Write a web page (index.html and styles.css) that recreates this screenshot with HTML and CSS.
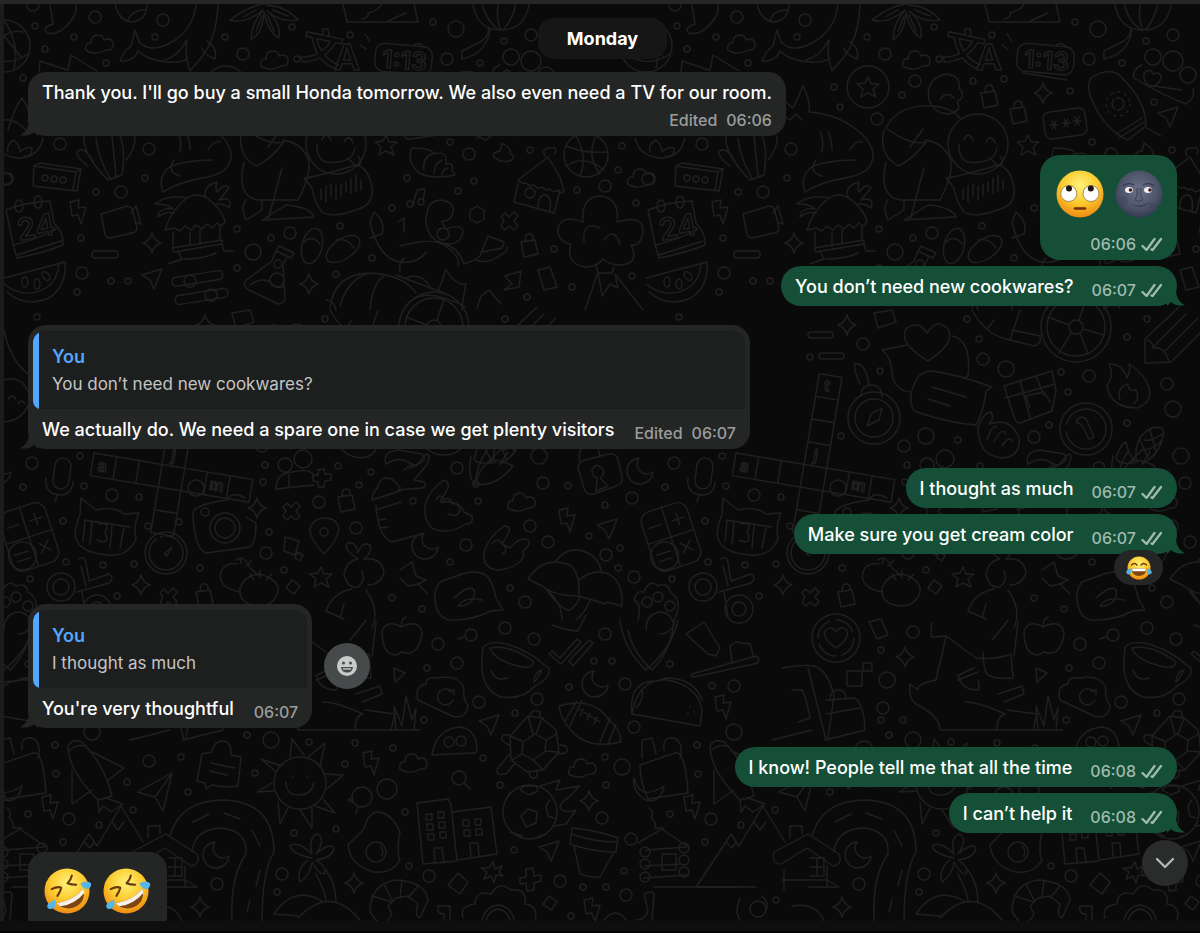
FILE: index.html
```
<!DOCTYPE html>
<html lang="en">

<head>
    <meta charset="UTF-8">
    <meta name="viewport" content="width=device-width, initial-scale=1.0">
    <title>Chat</title>
    <link rel="stylesheet" href="styles.css">
</head>

<body>
    <!-- shared icons -->
    <svg class="sprite" aria-hidden="true">
        <defs>
            <radialGradient id="skin" cx="50%" cy="32%" r="68%">
                <stop offset="0" stop-color="#fff27a" />
                <stop offset="0.55" stop-color="#fccb2e" />
                <stop offset="1" stop-color="#ee8a12" />
            </radialGradient>
            <radialGradient id="moon-skin" cx="50%" cy="42%" r="58%">
                <stop offset="0" stop-color="#6c7289" />
                <stop offset="0.7" stop-color="#4c5268" />
                <stop offset="1" stop-color="#343b50" />
            </radialGradient>

            <symbol id="ticks" viewBox="0 0 22 16">
                <path d="M1.500 10l4 4L13.500 3M10.500 13.500l1 .5L20 3" fill="none" stroke="currentColor" stroke-width="2.300" stroke-linecap="round" stroke-linejoin="round" />
            </symbol>

            <symbol id="emoji-eyeroll" viewBox="0 0 48 48">
                <circle cx="24" cy="24" r="23.500" fill="url(#skin)" />
                <circle cx="12.800" cy="23.500" r="8" fill="#fff" stroke="#8b7440" stroke-width="0.800" />
                <circle cx="35" cy="23.500" r="8" fill="#fff" stroke="#8b7440" stroke-width="0.800" />
                <circle cx="13" cy="18.500" r="3" fill="#1c1310" />
                <circle cx="34.800" cy="18.500" r="3" fill="#1c1310" />
                <path d="M19 38.500h10" stroke="#6e2e0c" stroke-width="2.400" stroke-linecap="round" />
            </symbol>

            <symbol id="emoji-moon" viewBox="0 0 48 48">
                <circle cx="24" cy="24" r="23.500" fill="url(#moon-skin)" />
                <circle cx="9" cy="31" r="4" fill="#3f465a" opacity="0.500" />
                <circle cx="37" cy="37" r="4" fill="#3f465a" opacity="0.500" />
                <path d="M8 16q5-4 11-1M28 15q6-3 11 1" fill="none" stroke="#363b4e" stroke-width="1.200" />
                <path d="M22 18q1 8-2 12q4 3 8 0q-3-4-2-12" fill="#596078" stroke="#3a4055" stroke-width="0.800" />
                <ellipse cx="14" cy="20" rx="4" ry="3" fill="#f4f0ee" />
                <ellipse cx="33" cy="20" rx="4" ry="3" fill="#f4f0ee" />
                <circle cx="15.500" cy="20" r="1.800" fill="#3a1c1c" />
                <circle cx="35" cy="20" r="1.800" fill="#3a1c1c" />
                <path d="M15 34q9 4 19-2q-3 5-9 5t-10-3z" fill="#3d4358" />
            </symbol>

            <symbol id="emoji-rofl" viewBox="0 0 50 48">
                <circle cx="24" cy="24" r="23.500" fill="url(#skin)" />
                <path d="M8 22q6-3 10-1.500q-1 4-4 8.500M29 8q-1 5-4.500 8q4 1.500 9 1.500" fill="none" stroke="#69370c" stroke-width="2.200" stroke-linejoin="round" stroke-linecap="round" />
                <path d="M13 37Q31 34 41 21.500Q44 35 33 40.500Q22 45 13 37z" fill="#7d4511" />
                <path d="M13 37Q31 34 41 21.500L42 26Q32 38 17 40z" fill="#f6f1ea" />
                <path d="M38 16q7-4 11 0q1 5-4 6q-5 0-7-6z" fill="#55b6ea" />
                <path d="M11.500 33q2 8-3 9.500q-6 1-5-4q2-3 8-5.500z" fill="#55b6ea" />
            </symbol>

            <symbol id="emoji-joy" viewBox="0 0 26 24">
                <circle cx="13" cy="12" r="11.500" fill="url(#skin)" />
                <path d="M5.500 9q3-3 5.500 0M15 9q2.500-3 5.500 0" fill="none" stroke="#69370c" stroke-width="1.400" stroke-linecap="round" />
                <path d="M5.500 12.500h15q-.5 7.500-7.500 7.500t-7.500-7.500z" fill="#7d4511" />
                <path d="M6 12.500h14l-.6 2.800h-12.800z" fill="#fff" />
                <path d="M4.800 12.500q1 6-2.300 6q-3-1-2-3.500q1-2 4.300-2.500zM21.200 12.500q-1 6 2.300 6q3-1 2-3.500q-1-2-4.300-2.500z" fill="#4fb2ea" />
            </symbol>

            <symbol id="tail-out" viewBox="0 0 18 16">
                <path d="M9 0C9 7 12 12 18 15.500C12 16 7 15 4 12L0 16V0z" fill="currentColor" />
            </symbol>
            <symbol id="tail-in" viewBox="0 0 18 16">
                <path d="M9 0C9 7 6 12 0 15.500C6 16 11 15 14 12L18 16V0z" fill="currentColor" />
            </symbol>

            <!-- small doodles, each centred on 0,0 -->
            <g id="d-bolt"><path d="M-8-10l9-2l-1 8l8-1l-5 17l-3-9l-6 1z" /></g>
            <g id="d-spark"><path d="M0-10q2 8 9 10q-7 2-9 10q-2-8-9-10q7-2 9-10z" /></g>
            <g id="d-cloud"><path d="M-9 8q-6-1-4-6q1-4 5-3q0-8 7-8q5 0 6 5q7-3 9 3q1 8-7 7q-8 5-16 2z" /></g>
            <g id="d-moon"><path d="M-3-12a13 13 0 1 0 14 14a10 10 0 0 1-14-14z" /></g>
            <g id="d-cursor"><path d="M10-9l-20 6l8 5l4 9z" /></g>
            <g id="d-cross"><path d="M-8-5l4-4l4 4l5-5l4 4l-4 5l4 5l-4 4l-5-4l-4 4l-4-4l3-5z" /></g>
            <g id="d-star"><path d="M0-10l3 7l8 0l-6 5l3 8l-8-4l-7 4l2-8l-6-5l8-1z" /></g>
            <g id="d-diamond"><path d="M-1-7l8 6l-6 8l-8-6z" /></g>
            <g id="d-bag"><path d="M-8-5l14-2l3 14l-14 3zM-4-6q0-8 5-7q4 1 3 6" /></g>

            <pattern id="wallpaper" width="642" height="933" patternUnits="userSpaceOnUse">
                <use href="#doodles" x="-642" />
                <use href="#doodles" />
                <use href="#doodles" x="642" />
            </pattern>

            <g id="doodles" class="doodles">
                <g id="rings"></g>
                <g id="stamps"></g>

                <!-- sea life, fruit, sock, flower -->
                <path d="M50 4l3 20q-12 4-6 9q14 3 26-15q4-6 3-14M115 4q4 17 17 18q15-2 15-18M128 21q3-11 17-11" />
                <path d="M218 4q-1 34-17 54q-7 8-11 13q-6-17-3-31M196 4q-3 28-28 40q-18 9-29-2l-4-12l-4 16q-8 6-11 15q14 1 18-10q10 10 32 11q12 1 18-4M207 41q11 7 8 18q-12-5-13-11M164 60q15-4 22-19" />
                <path d="M264 4q-16 2-34 16q17 4 33-10q-12 14-12 30q12-8 13-28q4 20 15 26q2-16-12-27q14 12 31 9q-12-14-32-15M243 17l13-7M256 31l6-15M274 31l-7-16M288 16l-15-6" />
                <circle cx="4" cy="46" r="26" /><path d="M-8 46q16-18 32-14M4 20q16 24 10 48M-14 56q22 12 42-2M4 36l18 22" />
                <path d="M39 72l1-11l27 9M68 70l3-15l26 16" />
                <!-- translate and alarm clock -->
                <g class="letters">
                    <text x="302" y="62" font-size="40" transform="rotate(12 320 48)">文</text>
                    <text x="334" y="70" font-size="36">A</text>
                    <text x="382" y="69" font-size="25" transform="rotate(4 402 60)">1:13</text>
                    <text x="17" y="238" font-size="30" transform="rotate(-10 33 228)">24</text>
                </g>
                <path d="M343 4l4 18h71l-4-18M362 19q8-2 6-6q10-2 14-9M386 22l20-9" />
                <rect x="375" y="45" width="57" height="28" rx="9" transform="rotate(5 403 59)" />
                <path d="M381 73l44 7M366 49l-6-4M370 42l-5-8M414 45q6-4 10 2" />
                <path d="M473 4q4 26 28 26t28-26M482 4q5 18 16 25M498 4q-2 16 3 26M516 4q-4 16-12 25M488 27q2 8-6 14l-20 10v8q18-4 24-17q3-4 4-12" />
                <circle cx="511" cy="57" r="8" /><circle cx="531" cy="61" r="10" /><circle cx="546" cy="75" r="8" />
                <path d="M500 65q-10 4-8 13q30 18 52 26q10-6 7-15M502 73q6-6 9 1q8-3 8 4q-2 8-12 9q-6-6-5-14M505 85l34 5" />
                <path d="M449 78q22-14 33 2q22 22 22 46l-18 14q-24-10-38-44q-3-12 1-18zM504 121l-27 17M500 118l-26 16M505 128l14 8" />
                <circle cx="476" cy="104" r="6" stroke-dasharray="10 3" /><circle cx="476" cy="104" r="12" stroke-dasharray="2 5" />
                <circle cx="226" cy="87" r="21" /><use href="#d-star" x="226" y="87" />
                <!-- fox -->
                <path d="M137 120q6-10 2-22l12 10q6-12 10-22q8 16 6 26q28 2 48 18q22 18 14 34q-4 10-26 14q-24 4-40 14q-6-16 8-26q18-6 42-6M180 152q2-12-2-20M190 150q0-10-4-18M208 150q6-10 12-8M140 115l8 5l6-6l6 6M174 160q-8 12 6 16" />
                <!-- hug -->
                <path d="M287 100q-4-22 18-26q14 2 12 14q8 8-2 14q6 8-8 12q-14 0-20-14zM298 100q6-10 14-2M244 128q12-24 46-22M318 118q-8-10-26-12M244 128q24 18 40 14q-14 18-28 24q-20-12-14-36M268 147l13-18M244 162q-8 34 14 38h40q16-30 9-44q-8-14-24-16M246 200q-6 8 0 20l16-10v-9M262 220l52-3q-4-10-28-12l-24 15M282 168l-14 52" />
                <circle cx="336" cy="144" r="30" /><path d="M322 140q4-10 9 0M344 142q5-9 9 1M317 144q-1 22 20 18q16-1 18-14M348 158l8 8q8-2 2-10" />
                <path d="M304 178q16-2 52-13q12 2 16 22q2 18-14 22q-24 10-36 3q-8-10-10-24zM321 189v10M326 186v16M331 184v12M336 186v14M341 184v12M346 182v10M351 178v15M356 175v16M361 180v10" />
                <rect x="402" y="110" width="42" height="27" rx="6" transform="rotate(-8 423 123)" />
                <path d="M408 125h8M410 121l4 8M414 121l-4 8M420 123h8M422 119l4 8M426 119l-4 8M431 121h8M433 117l4 8M437 117l-4 8" />
                <!-- lotus bowl, ticket, cactus -->
                <path d="M8 130q6-22 14-32q10 14 6 24M4 120q10-2 22 10M43 138q-4 20-26 20q-20-2-24-20M8 152q-2-8 6-12q6 6 6 12q6-6 12-4q0 10-8 8" />
                <path d="M34 166l6-3l41 6l-4 22l-44-5zM34 166l42 6l-3 18M76 172l5-3" />
                <path d="M84 136q-2 18 24 44l14-5q4-26-2-39M96 138q2 20 14 40M112 136l4 40M126 160q10-12 9-24M88 166q-16-12-9-16q8-2 16 16" />
                <!-- calendar, camcorder, hut -->
                <path d="M6 210q20-8 44-9l4 22q10 10 9 22q-20 8-46 13l-4-14zM14 245q24-6 42-16M17 255l44-14" />
                <ellipse cx="19" cy="206" rx="4" ry="6" /><ellipse cx="38" cy="202" rx="4" ry="6" />
                <path d="M101 214l26-8q5 0 6 6l4 16q0 4-5 5l-22 5q-4 0-5-4zM131 213l5-7l5 18l-6-2" />
                <path d="M165 230q6-20 22-32q10-6 20 0q16 12 18 24l-4 4l-4-3l-5 5l-5-4l-5 5l-6-4l-5 5l-6-4l-5 5l-6-3zM173 232v14M220 227v12M190 232v14M200 230v14M172 248l50-8v4l-48 8zM178 251l4 8l-14 5M222 244l2 7h9M184 259q20 0 32-6M187 198q-20-4-32 6q14 0 18 5q-14-2-15 8q8-6 16-4M206 198q-4-12 11-16q-2 6 0 10q8-10 12-4l-10 12q14-4 10 8q-8-6-14-3" />
                <!-- fruit, sliders, flask, sandals, chili -->
                <path d="M4 278l61-16q2 24-16 36q-24 10-42-6M4 284q20 16 42 4q12-8 13-24" />
                <ellipse cx="25" cy="282" rx="3" ry="5" /><ellipse cx="37" cy="284" rx="3" ry="5" /><ellipse cx="46" cy="276" rx="3" ry="5" transform="rotate(-40 46 276)" />
                <rect x="92" y="251" width="26" height="7" rx="3" />
                <rect x="172" y="274" width="51" height="9" rx="4" transform="rotate(-9 197 279)" /><circle cx="190" cy="281" r="6" />
                <rect x="175" y="292" width="53" height="9" rx="4" transform="rotate(-9 201 297)" /><circle cx="211" cy="295" r="6" />
                <path d="M276 251l-4 10l-27 20q-2 6 4 9l29 14q6 0 7-6l-2-33l4-9M279 246l15 7l-3 5l-15-7zM250 285q12-8 20-3q6 8 14 4" /><circle cx="277" cy="280" r="7" /><circle cx="278" cy="264" r="4" />
                <ellipse cx="312" cy="246" rx="10" ry="18" transform="rotate(14 312 246)" /><ellipse cx="343" cy="249" rx="10" ry="19" transform="rotate(56 343 249)" /><path d="M304 242q8-8 16 2M336 240q12-2 18 8" />
                <path d="M370 222q8 36 30 40q18 2 26-10M370 222l4-10q12 10 8 22l-12 4M330 308q4-34 40-35q34 2 46 20M340 306q8-28 30-33M370 310q2-26 14-34M326 300q8 0 10 10" />
                <!-- shell, beach house, ball, notes -->
                <path d="M412 148q20 0 22 6q14-4 12 10q8-2 6 6l3 5q-30 6-40-6q-8-10-3-21zM424 170q-2-12 8-16M434 174q0-10 8-14M442 176q0-6 6-8" />
                <path d="M494 157q-2-5 6-6l2-8q10 6 8 10q6 4 2 7q-10 4-18-3z" />
                <path d="M518 180l30-23l12 20l4 14q-3 4-7-1q-4 4-7-1q-5 2-8-2q-4 3-8-2q-4 2-8-2q-5 1-8-3zM518 184l-4 18l40 11l6-23M538 208q0-14 8-13q6 2 4 16M545 156q-4-8 5-8q8-2 5 6" /><circle cx="530" cy="193" r="5" />
                <circle cx="586" cy="155" r="22" /><path d="M566 146q20 8 42 6M566 166q18-12 38 4M576 136q12 20 4 40M596 136q-10 20 4 38" />
                <path d="M413 205l4-15l8-1l-2 12M398 222l6-4v14" /><circle cx="410" cy="204" r="3" /><circle cx="421" cy="202" r="3" />
                <path d="M427 215q0-14 14-15q14 2 12 12q-2 10-11 9l4 8q16-6 17 3q-2 12-15 12q-16-2-20-14q-4-10-1-15zM400 246q30-8 42-2q16 2 22 20q12-4 16-8l8-20l16 6l-2 6l-20 4M476 260q10 4 20-2q14-8 11-11M404 310q14-28 62-3M396 275l48 18M438 292l8-22q10 16 20 14q-4 20-4 26M445 246q16 10 13 20" />
                <circle cx="443" cy="234" r="6" /><path d="M404 258q-6 6-4 14M406 278q14-6 24 8" />
                <path d="M477 206l7 4v9l-7 4l-7-4v-9z" />
                <!-- tree on a hill -->
                <path d="M583 222q-2-25 17-26q20 2 17 26q26-8 26 9q-2 16-12 14q10 20-14 20q-10-2-14-6q-6 8-18 8q-20-4-14-23q-14-2-13-16q4-14 25-6zM600 228q-18-8-16 14M604 240q10-14 16 4M596 265l2 8h14l2-6M585 310l13-38l4 24l8-12l8 4l-3-14l28 36" />
                <path d="M504 290l8-6l-7-8l16-5l-2 16zM538 270l12-3l7 20l-13 3zM477 308l4-12l8-6l12 14" />

                <!-- balloon hearts, compass, parcel, wheel, pencil -->
                <rect x="166" y="332" width="25" height="6" rx="3" /><rect x="177" y="353" width="25" height="6" rx="3" />
                <path d="M232 313l18-3l4 12l-18 6zM286 361q-30-18-22-32q12-10 21 4q10-16 21-4q8 14-20 32zM265 345l-25 5q10 8 10 24q2 16 18 18M310 336q20 4 16 40l-4 2" />
                <path d="M290 371q28 4 60 16l-6 4q-2 20-10 34q-28-2-62-14q-8-14 4-34q6-6 14-6zM290 387l34 10M286 399l22 7" />
                <circle cx="232" cy="418" r="26" /><circle cx="232" cy="418" r="19" /><path d="M225 426l4-12l11-6l-3 12zM219 396q0-10 9-11q12 0 12 12M218 384q-10-24-2-20q8 2 11 20" />
                <path d="M362 386l48-15l4 20l-4 20l-32 12q-4 0-6-6zM363 398l50-14M378 380l10 38M394 376l8 20M388 408l-4-12l18-4l6 10" />
                <circle cx="434" cy="327" r="35" /><circle cx="434" cy="327" r="29" /><circle cx="434" cy="327" r="7" /><path d="M427 325l-21-8M437 320l7-21M441 329l21 6M429 333l-12 20M438 333l8 21" />
                <path d="M330 310q14 26 38 30l10-30M346 328l6-8M368 340l24 6q8-2 6-10l-28-6" />
                <path d="M503 363v-24l34-32M503 363l26-1l34-34M503 340q8 0 8 8q12-2 16 14M512 346l32-32M522 352l34-34" />
                <circle cx="444" cy="429" r="26" /><circle cx="444" cy="429" r="20" stroke-dasharray="60 8" /><path d="M434 422q4-8 10-3l8 18l-5 2l-7-14z" />
                <path d="M465 386q8-12 2-22q14 0 18 14q4-8 2-14q16 10 20 24q4 14-12 20q-26 0-30-22zM478 400q-4-12 8-16q0 8 8 6q4 8-2 14" />
                <path d="M337 424q6-12 12-12q4 6-2 12l10-2q14 0 20 16q2 18-16 20q-22-2-24-22q-2-6 0-12zM345 440q6-18 10-12M352 442q8-16 12-8M360 446q8-12 10-4M386 464q-4-12 12-14l24 4q6 6-4 10l-8 4" />
                <path d="M494 460q-2-24 16-32q16-4 10 12q-4 16-20 24M500 450q12 0 20-10M502 440q8 2 18-6M496 462q-20 4-22-4q4-14 10-16q2 12 8 18M508 430l6 22M498 440l8 18" />
                <path d="M4 330q6 30 24 44M4 380q20-6 26 18q-4 22-26 24M8 400q4-8 8 0M18 404q4-6 7 0" />
                <!-- crossword -->
                <g transform="translate(94 453) rotate(9.500)">
                    <path d="M0 0h161v23h-161zM23 0v23M46 0v23M69-92h23v161h-23zM69-69h23M69-46h23M69-23h23M69 0h23M69 23h23M69 46h23M115 0v23M138 0v23" />
                    <g class="letters">
                        <text x="6" y="17" font-size="16">a</text><text x="76" y="-76" font-size="16">t</text><text x="77" y="-5" font-size="16">j</text><text x="119" y="17" font-size="16">m</text>
                    </g>
                </g>
                <!-- microphone, calculator, cat, gauge, camera -->
                <rect x="54" y="458" width="16" height="31" rx="8" transform="rotate(8 62 473)" /><path d="M46 478q-2 16 14 17q12 0 13-13M57 495l-2 7" />
                <g transform="translate(29 537) rotate(-18)"><rect x="-24" y="-31" width="48" height="62" rx="10" /><path d="M0-31v62M-24 0h48M12-21v12M6-15h12M-18-15h12M7 9l10 10M17 9l-10 10" /><circle cx="-12" cy="16" r="14" /><path d="M-19 13h14M-19 20h14" /></g>
                <path d="M81 498l15 12q18-4 28 4l15-1q-6 12-3 26q-8 18-28 16q-32-2-33-22q2-12 5-18zM84 520l46 7M85 521l-2 20M92 522l-2 22M112 526l-2 22M124 528l-4 20M99 524q12-2 6 8q6 14-8 8" />
                <circle cx="166" cy="553" r="21" /><circle cx="166" cy="553" r="17" stroke-dasharray="70 4 2 4" /><path d="M164 554l8-7l-5 9z" />
                <path d="M193 512q4-8 34-12q4-8 14-4l4 2M246 517l10 6q0 20-6 24l-44 6q-12-4-13-41" /><circle cx="225" cy="528" r="15" /><circle cx="225" cy="528" r="10" /><circle cx="205" cy="512" r="4" />
                <circle cx="285" cy="465" r="7" /><circle cx="303" cy="459" r="9" /><path d="M276 489q0-16 16-17q20-4 22 4M276 489l38-4M289 487v-12M318 470l6-1l1 5h6v6l-6 1l-1 6h-6v-5l-5-1v-6h5z" />
                <path d="M324 554q-16-18-14-26q4-10 15-10q12 0 14 11q-2 12-15 25z" /><circle cx="324" cy="532" r="4" />
                <path d="M285 537l14 4l-4 14l-11-4zM297 552l6 3l-3 6l-5-3z" />
                <path d="M372 500l28-9v-4l-8-8q-12-4-14 8q-6 6-6 13zM375 510l26-8M376 505q2 32 16 37l30-8M378 520l8-1M380 528l8-1" />
                <path d="M241 592q-24-4-20-20q4-10 16-8M236 560q8-6 14 8q6 4 8 8M240 564l2-6M246 566l6-6" /><path d="M258 606q-20-2-18-18q6-14 20-14q20 6 18 18q-4 14-20 14zM254 580l-4-6M260 578v-8M266 580l6-6" />
                <circle cx="61" cy="587" r="14" /><circle cx="61" cy="587" r="8" /><path d="M79 559q6-4 7 4l3 18l20-7q6 4 0 9l-32 9M81 566l5 20M82 592l4 24" /><circle cx="97" cy="609" r="14" /><circle cx="97" cy="609" r="7" />
                <path d="M344 575q2-14 14-16q-16-10-10-16q8-2 10 10q4-12 12-8q2 8-6 14q18-2 20 14q-4 12-16 12M344 575q4 14 14 12q8-6 4-16M352 589q-20 4-26 22l18 8M366 590q14 20 6 38M344 604l-4 14" />
                <!-- hands, locks, hats -->
                <path d="M386 464q10-6 18-4l12 6l10-12q6 0 0 12l-12 14l10 2q4 4-2 6l-24 2M404 470l8-6" />
                <path d="M426 502q4-12 18-22q6 2 4 8l-8 14q20-2 24 10l8 4q2 8-6 8q-20 12-34 4q-10-10-6-26zM436 500q4-8 8 0q6-4 8 4q6-2 8 6q-2 8-12 4M484 552q4-14 20-26q8 0 4 8l-6 10l8 4q10-12 18-8q4 4-6 12l2 2q-2 12-24 16q-18 0-16-18zM492 544q6-8 10 0q8 6 0 10" />
                <path d="M471 456q-4 22 4 28q20 4 38-18q-12-6-20-6q-12 4-18 24M487 450q-10 14-12 34M500 450l-14 14M508 452l-8 12" /><circle cx="476" cy="484" r="3" />
                <path d="M578 468q0-6 8-8l22-6q8-2 10 6l4 16q2 8-6 10l-22 8q-8 2-10-6zM580 462q-2-10 2-14M600 456l-2-8M592 470q4-8 10-2q4 6-2 10l8 8l-12 5l1-13q-5-2-5-8z" />
                <path d="M528 579q16-24 42-14q10 8 9 29M555 562q10-14 24-12q20 4 23 24M579 580q14-12 30-6q14 8 13 32l-16-4M528 579l14 7q12 10 37 10l27 8M542 586q20 14 20 34M548 592q16 20 22 18q8-6 10-14M590 600q-4 12-14 20" />
                <path d="M400 570l12-8l4 14l10 4l-8 4l10 10M418 584l-10 2l-8-8" />
                <path d="M436 606q-4-14 4-24l22-8q12-4 22 0q8 4 12 24l7 12l-12 1q-20 10-42 9q-10-2-13-14zM454 598q16-14 20-8q2 16-16 16q6-10 24-6" />
                <path d="M-4 620q4-16-4-20q2-10 10-8q6-14 14-6q10-4 12 6q14 8 4 28q-2 30-22 50q-20-18-24-40" /><circle cx="5" cy="602" r="5" /><circle cx="16" cy="597" r="5" /><circle cx="28" cy="606" r="5" />
                <path d="M4 630q0-16 14-18q10 0 14 12q-4 10-14 10" />

                <!-- badge, bus, stroller, apple -->
                <circle cx="194" cy="638" r="24" /><circle cx="194" cy="638" r="18" stroke-dasharray="22 6" /><path d="M194 648q-16-12-10-18q6-5 10 2q6-8 11-1q3 7-11 17z" />
                <path d="M227 622l12-3l7 16l-11 4zM205 671h15v15h-15zM221 663h9v8h-9zM140 668q24-4 32-2q14 4 20 30l-2 14l-4 28M166 668l18 72M184 700l28-2q10 4 11 32l-40 10M184 714l34-6M188 700q0-10 8-10q8 0 8 8M130 740l40-10M150 690h10q4 6 8 28l-12 4" />
                <path d="M290 623q-2 10 0 14l14-1q-4 20-8 34l-2 10q-20 4-18 10l-8-6q-2 14 6 20q24 12 24 26h122M304 636l30 22q20 2 35-4l2 24q-26 2-28-8q-2-8-2-18M332 668q-14 6-16 8q4 14 20 14q2-4 0-10M316 680l20-8M356 694l24-8l2 8l-20 8M365 710q30 4 30 4l-4 16h-36q0-14 8-16q-26-12-40-12M396 730l-2-24l8 20l4-30l6 24l4-12l-2 22M376 622l-4 34M350 640q12-14 16-20" />
                <path d="M401 627q-14-8-19 4q0 24 14 24l6-3q16 6 20-18q-2-16-21-7zM401 627q0-8 5-10M394 668l11 5l-10 9z" />
                <!-- cup, double tick, toothbrush, cloud -->
                <path d="M483 648q4-8 24-4q24 8 36 20l6 4q2 10-14 18q-12 14-34 11q-24-8-18-49zM490 648q20-4 44 14q-2 8-16 4q-24-6-28-18zM542 670l-6 10l-2 2q0-10 8-12M491 670q4 12 16 8" />
                <path d="M549 654l3-3l8 7l17-19l4 3l-20 22zM569 661l20-21l4 3l-20 23zM552 625q16 6 26 6l8-16M620 620q4 30 26 50q26-22 32-50" />
                <path d="M686 634l18-12l16 26l-4 8l-8-2zM692 674l64-18q4 2 2 7l-64 14q-4-1-2-3zM732 662l-2-16l6-4l14 2l4 14" />
                <path d="M418 700q-4-14 8-16q0-8 12-6q20-4 26 10q-2 8 4 18q-2 14-16 10zM452 692a8 8 0 1 0 1 8M449 691l5-1v5" />
                <!-- football, taco, turtle, monster -->
                <path d="M559 706q34-10 50 14q12 10 12 22q-34 8-50-12q-10-10-12-24zM577 701l-12 20M582 700l-12 26M610 718l-10 24M616 724l-8 20M580 710l20 12M583 709l-3 7M590 713l-3 7M597 717l-3 7" />
                <path d="M-10 714q6-36 36-34q30 6 34 30l-2 16zM-10 714q-4-34 26-33l8-3q28 0 36 22M-6 708q8-8 6-18M48 706v1M52 711v1M46 713v1" />
                <path d="M510 736l18-20l14 2l14 12l3 22l-16 18l-16 2l-16-12zM523 742l12-8l11 6l-1 12l-12 8l-11-6zM528 716l5 18M542 718l-6 16M557 734l-11 6M558 752l-13-1M543 770l-10-10M512 760l10-6M510 736l12 5M530 716q2-8 10-4v5M509 745q-10-4-6-10h8M560 745q10 0 6 8l-7 1M516 762l-10 12q-12 2-8-6l12-14M529 772q2 10 8 4v-6" />
                <path d="M432 755q4-26 28-28q16 2 17 22q0 4-4 4z" /><circle cx="449" cy="742" r="5" /><circle cx="461" cy="741" r="5" />
                <path d="M465 784l5 5M464 637l-6 2" /><circle cx="459" cy="778" r="7" />
                <!-- backpack, rocket, plane, sign, sun -->
                <path d="M-2 765l35-12q10-4 13 40l-40 6q-8-16-8-34zM0 758v-18l10-2l4 16M22 750q-2-14 10-12q10 4 6 20M-8 778q6 24 30 8q-4 18-18 14q-14-8-12-22" />
                <path d="M68 746q4-8 14-4q22 22 30 54l-14 4q-30-30-30-54zM70 750q6-6 16-4M92 752l32 16l-16 12M72 770v34l20-14M98 800l8-2l17 6l-12 8l-8-6l-4 6z" />
                <path d="M137 792l35-19l-9 38l-8-14zM172 773l-17 24" />
                <path d="M202 754l10-2q2-12 12-11q8 2 7 14l10 2l-3 29q-14 2-26-1l-6 4l-1-6l-8-2zM211 763l24 5M210 771l17 4" />
                <circle cx="300" cy="783" r="26" /><path d="M286 782q0 14 14 13q12-1 14-12M293 776v1M307 776v1M290 757l2-18l12 16M308 757l17-14l-5 24M326 774l17 1l-16 14M323 799l12 14l-20-7M312 808v20l-12-18M288 808l-8 16l-2-22M274 791l-17 1l15-9M275 771l-14-12l21 7" />
                <circle cx="362" cy="797" r="10" /><circle cx="387" cy="789" r="10" /><path d="M352 798l-4 2l5 2M358 806l-2 8" />
                <!-- village -->
                <path d="M348 845l16-16q4-18 16-17q14 4 20 20q-4 20 0 28q-8 14-26 12q-24-6-26-27z" /><circle cx="376" cy="852" r="10" /><path d="M380 846q4 4 2 10" />
                <path d="M170 836q10-36 54-36q50 2 50 52q-12 20-12 69M192 852q2-22 28-24q28 2 26 26q-16 22-14 67M193 822l16-8M224 813l16 6M252 830l8 16M260 870l-4 16M250 900l-3 12" />
                <path d="M132 852l34-18l31 20q4 10-6 12l-26-18l-26 16q-10 0-7-12zM148 838v-12h12v8M142 870v20M185 866v20M168 858h14v18h-14M175 858v18M168 867h14M140 880h45l12 7h-30M14 828l8 0M12 887l84 0" />
                <path d="M76 854l13-20l8 12l24-40l22 36M84 842l6 6l4-6M112 822l6 8l6-8M76 854l-22 33h60" />
                <path d="M-4 843l24-14l26 18M4 850l40-3M3 866l36-2M2 878l44-3M20 854h14v16h-14z" /><circle cx="3" cy="852" r="5" /><circle cx="3" cy="864" r="5" /><circle cx="3" cy="877" r="5" /><circle cx="42" cy="848" r="5" /><circle cx="42" cy="860" r="5" /><circle cx="42" cy="872" r="5" /><path d="M7 808q6 4 2 10q6 4 4 10" />
                <path d="M312 858q-20-4-22-12q8-6 22 8q-4-18 6-20q8 6-2 20q14-12 18-6q-2 10-18 12q12 8 8 14q-6 0-12-12q-2 14-12 20q-4-12 8-22M316 874q10 20 10 28M326 870q10 14 10 32M274 914q20-30 50-12M298 918q32-34 62 2M274 914l24 2" />
                <path d="M370 912q0-28 26-32q30 2 32 20l-8 18q-6-2-2-14l-10-8l-12 2l-8 8l4 8q-8 14-16 6zM372 896l20 6M384 884l8 16M402 880l-2 18M418 886l-10 12" />
                <circle cx="530" cy="812" r="27" /><path d="M521 816l7-7l9 3l-1 11l-10 4zM520 790l4-4h12l2 5l-9 4zM550 800l-4 6l2 10l6 2M510 792l-4 8M510 832l12 4M546 834l-8 3M540 786l20-6l-4 10l24-4l-12 12q-8 4-8 10q6 6 16 2l-10 14l-12 2" />
                <path d="M417 803l31-4l3 6l6 56l-34 3zM453 812l38-5l6 47l-40 6M435 863l-1-15h8l2 15M471 857l-1-14h8l1 13M426 814h6v6h-6zM438 812h6v6h-6zM427 824h6v6h-6zM439 822h6v6h-6zM428 834h6v6h-6zM440 832h6v6h-6zM463 820h6v6h-6zM475 819h6v6h-6zM464 830h6v6h-6zM476 829h6v6h-6z" />
                <path d="M572 828q24 2 46 10l-2 14q-24 0-46-8zM574 846l6 28q10 4 20 3l14-25M572 834q20 8 46 8" />
                <path d="M493 862l2 7l7-3l-3 6l4 4l-7-1l-2 8l-3-7l-7 3l3-7l-6-4l8 0zM526 869l7-1l1 8l7-1v6l-7 2v7l-7 1l-1-8l-6 1v-6l6-1zM458 873l10 9l-8 12l-12-9z" />
                <path d="M463 918q-4-12 12-14q0-14 16-10q8-14 20-4q16-2 14 14q14 2 10 16M482 920q4-14 16-15q14 2 16 15M486 920q4-10 12-11q10 2 12 11M438 906h12v14M438 906q-2 8 6 8v6" />
                <path d="M604 920q12-14 22 0M636 920q10 0 12-10l-4-16q8-4 10 0l-2 26M98 898q-6 14 0 22M120 896q8 8 4 14M150 906q24-4 32 15" /><circle cx="116" cy="909" r="8" />
            </g>
        </defs>
    </svg>

    <div class="title-edge"></div>

    <main class="chat">
        <svg class="wallpaper" aria-hidden="true">
            <rect width="100%" height="100%" fill="url(#wallpaper)" />
        </svg>

        <div class="messages">
            <h2 class="day">Monday</h2>

            <div class="row group">
                <div class="bubble in">
                    <p class="text">Thank you. I'll go buy a small Honda tomorrow. We also even need a TV for our room.</p>
                    <p class="meta below"><span>Edited</span><time>06:06</time></p>
                    <svg class="tail"><use href="#tail-in" /></svg>
                </div>
            </div>

            <div class="row mine group">
                <div class="bubble out big">
                    <div class="emojis">
                        <svg class="emoji" role="img" aria-label="Face with rolling eyes"><use href="#emoji-eyeroll" /></svg>
                        <svg class="emoji" role="img" aria-label="New moon face"><use href="#emoji-moon" /></svg>
                    </div>
                    <p class="meta"><time>06:06</time><svg class="ticks"><use href="#ticks" /></svg></p>
                </div>
            </div>
            <div class="row mine">
                <div class="bubble out">
                    <div class="line">
                        <p class="text">You don’t need new cookwares?</p>
                        <p class="meta"><time>06:07</time><svg class="ticks"><use href="#ticks" /></svg></p>
                    </div>
                    <svg class="tail"><use href="#tail-out" /></svg>
                </div>
            </div>

            <div class="row group">
                <div class="bubble in reply">
                    <blockquote class="quote">
                        <p class="author">You</p>
                        <p class="quoted">You don’t need new cookwares?</p>
                    </blockquote>
                    <div class="line">
                        <p class="text">We actually do. We need a spare one in case we get plenty visitors</p>
                        <p class="meta"><span>Edited</span><time>06:07</time></p>
                    </div>
                    <svg class="tail"><use href="#tail-in" /></svg>
                </div>
            </div>

            <div class="row mine group">
                <div class="bubble out">
                    <div class="line">
                        <p class="text">I thought as much</p>
                        <p class="meta"><time>06:07</time><svg class="ticks"><use href="#ticks" /></svg></p>
                    </div>
                </div>
            </div>
            <div class="row mine reacted">
                <div class="bubble out">
                    <div class="line">
                        <p class="text">Make sure you get cream color</p>
                        <p class="meta"><time>06:07</time><svg class="ticks"><use href="#ticks" /></svg></p>
                    </div>
                    <svg class="tail"><use href="#tail-out" /></svg>
                    <button class="reaction" type="button" aria-label="Reaction: tears of joy"><svg><use href="#emoji-joy" /></svg></button>
                </div>
            </div>

            <div class="row group">
                <div class="bubble in reply">
                    <blockquote class="quote">
                        <p class="author">You</p>
                        <p class="quoted">I thought as much</p>
                    </blockquote>
                    <div class="line">
                        <p class="text">You're very thoughtful</p>
                        <p class="meta"><time>06:07</time></p>
                    </div>
                    <svg class="tail"><use href="#tail-in" /></svg>
                </div>
                <button class="round react" type="button" aria-label="React">
                    <svg width="22" height="22" viewBox="0 0 22 22">
                        <circle cx="11" cy="11" r="10" fill="#c9cbcb" />
                        <circle cx="7.500" cy="8" r="1.500" fill="#474a4b" />
                        <circle cx="14.500" cy="8" r="1.500" fill="#474a4b" />
                        <path d="M5 12h12q-.5 5.500-6 5.500t-6-5.500z" fill="#474a4b" />
                        <path d="M7 13.200h8v1.400h-8z" fill="#c9cbcb" />
                    </svg>
                </button>
            </div>

            <div class="row mine group">
                <div class="bubble out">
                    <div class="line">
                        <p class="text">I know! People tell me that all the time</p>
                        <p class="meta"><time>06:08</time><svg class="ticks"><use href="#ticks" /></svg></p>
                    </div>
                </div>
            </div>
            <div class="row mine">
                <div class="bubble out">
                    <div class="line">
                        <p class="text">I can’t help it</p>
                        <p class="meta"><time>06:08</time><svg class="ticks"><use href="#ticks" /></svg></p>
                    </div>
                    <svg class="tail"><use href="#tail-out" /></svg>
                </div>
            </div>

            <div class="row group">
                <div class="bubble in big">
                    <div class="emojis">
                        <svg class="emoji" role="img" aria-label="Rolling on the floor laughing"><use href="#emoji-rofl" /></svg>
                        <svg class="emoji" role="img" aria-label="Rolling on the floor laughing"><use href="#emoji-rofl" /></svg>
                    </div>
                </div>
            </div>
        </div>

        <button class="round to-end" type="button" aria-label="Scroll to the latest message">
            <svg width="22" height="22" viewBox="0 0 22 22">
                <path d="M3 7l8 8l8-8" fill="none" stroke="#b4b6b6" stroke-width="2.400" stroke-linecap="round" stroke-linejoin="round" />
            </svg>
        </button>
    </main>

    <div class="composer-edge"></div>

    <script src="wallpaper.js"></script>
</body>

</html>
```
FILE: styles.css
```
* {
    box-sizing: border-box;
}

body {
    margin: 0;
    height: 100vh;
    display: flex;
    flex-direction: column;
    background-color: #0a0a0a;
    color: #fff;
    font-family: Inter, "Liberation Sans", sans-serif;
}

p,
h2,
blockquote {
    margin: 0;
}

button {
    border: 0;
    padding: 0;
    cursor: pointer;
}

svg {
    display: block;
}

.sprite {
    position: absolute;
    width: 0;
    height: 0;
}

.title-edge {
    flex: none;
    height: 4px;
    background-color: #262626;
}

.composer-edge {
    flex: none;
    height: 12px;
    background-color: #0e0e0e;
    border-bottom: 2px solid #050505;
}

.chat {
    position: relative;
    flex: 1;
    min-height: 0;
    overflow: hidden;
    border-left: 4px solid #1c1c1c;
}

/* wallpaper */
.wallpaper {
    position: absolute;
    top: -4px;
    left: -4px;
    width: calc(100% + 4px);
    height: calc(100% + 4px);
}

.doodles {
    fill: none;
    stroke: #1f1f1f;
    stroke-width: 1.4px;
    stroke-linejoin: round;
    stroke-linecap: round;
}

.letters {
    font-family: Inter, "Noto Sans CJK SC", sans-serif;
    font-weight: 600;
}

/* messages */
.messages {
    position: relative;
    display: flex;
    flex-direction: column;
    gap: 6px;
    padding: 14px 23px 0 24px;
}

.day {
    align-self: center;
    padding: 0 29px;
    margin-bottom: -6px;
    border-radius: 16px;
    background-color: #161616;
    font-size: 18px;
    font-weight: 700;
    line-height: 41px;
}

.row {
    display: flex;
    align-items: center;
    gap: 12px;
}

.mine {
    justify-content: flex-end;
}

.group {
    margin-top: 13px;
}

.reacted {
    margin-bottom: 31px;
}

.bubble {
    position: relative;
    border-radius: 18px;
    padding: 7px 14px 5px;
}

.in {
    background-color: #232625;
}

.out {
    background-color: #154f38;
    border-radius: 20px;
}

.text {
    font-size: 18px;
    font-weight: 500;
    line-height: 28px;
}

.meta {
    display: flex;
    align-items: center;
    justify-content: flex-end;
    gap: 9px;
    font-size: 16px;
    font-weight: 500;
    line-height: 22px;
    color: #9b9d9c;
    white-space: nowrap;
}

.out .meta {
    gap: 5px;
    color: #a0bbaf;
}

.below {
    margin-top: 2px;
}

.ticks {
    width: 22px;
    height: 16px;
}

.line {
    display: flex;
    align-items: flex-end;
    justify-content: space-between;
    gap: 18px;
}

.reply {
    padding: 6px 0 0;
}

.reply .line {
    gap: 20px;
    padding: 7px 14px 5px;
}

.quote {
    margin: 0 5px;
    padding: 12px 19px;
    border-radius: 12px 12px 0 8px;
    background: linear-gradient(to right, #53a6fd 6px, #1d1e1e 6px);
}

.author {
    font-size: 18px;
    font-weight: 600;
    line-height: 28px;
    color: #53a6fd;
}

.quoted {
    font-size: 17px;
    line-height: 26px;
    color: #c4c5c5;
}

.tail {
    position: absolute;
    bottom: 0;
    width: 18px;
    height: 16px;
}

.in .tail {
    left: -8px;
    color: #232625;
}

.out .tail {
    right: -8px;
    color: #154f38;
}

.big {
    padding: 15px 16px 5px;
}

.out.big {
    padding-right: 14px;
}

.emojis {
    display: flex;
    gap: 11px;
    margin-bottom: 15px;
}

.emoji {
    width: 48px;
    height: 48px;
}

.reaction {
    position: absolute;
    right: 14px;
    bottom: -31px;
    display: flex;
    align-items: center;
    justify-content: center;
    width: 49px;
    height: 35px;
    border-radius: 18px;
    background-color: #232625;
}

.reaction svg {
    width: 26px;
    height: 24px;
}

.round {
    display: flex;
    align-items: center;
    justify-content: center;
    width: 46px;
    height: 46px;
    border-radius: 50%;
}

.react {
    background-color: #474a4b;
}

.to-end {
    position: absolute;
    right: 12px;
    bottom: 35px;
    background-color: #2a2b2b;
}
```
FILE: wallpaper.js
```
// Fills the wallpaper tile with its rings and small stamps.
const SVG = 'http://www.w3.org/2000/svg';

// radius -> centres
const rings = {
    3: [[35, 26], [74, 37], [155, 37], [45, 49], [106, 63], [23, 78], [225, 37], [297, 59], [292, 27], [350, 35],
        [192, 87], [198, 107], [260, 95], [331, 81], [362, 79], [428, 91], [512, 102], [450, 142], [530, 150],
        [433, 22], [504, 41], [480, 63], [96, 192], [81, 238], [77, 292], [111, 281], [128, 281], [145, 178],
        [237, 229], [237, 268], [271, 238], [340, 226], [372, 258], [336, 274], [392, 208], [45, 178], [54, 179], [63, 180],
        [407, 178], [474, 181], [458, 191], [618, 170], [577, 190], [636, 203], [622, 146], [554, 249], [572, 287],
        [527, 297], [632, 276], [168, 357], [238, 371], [199, 436], [316, 440], [337, 339], [419, 372], [426, 392],
        [407, 425], [485, 423], [325, 319], [505, 319], [485, 337], [37, 317],
        [23, 487], [80, 456], [84, 486], [139, 497], [214, 486], [265, 465], [263, 482], [338, 466], [371, 472],
        [359, 485], [63, 521], [148, 526], [179, 522], [269, 532], [284, 570], [66, 562], [103, 565], [134, 564],
        [200, 568], [30, 579], [117, 596], [568, 486], [413, 501], [478, 501], [450, 562], [605, 505], [589, 536],
        [618, 568], [620, 548], [510, 588], [422, 609], [392, 598], [55, 745], [56, 774], [181, 757], [127, 782],
        [188, 792], [133, 810], [28, 814], [99, 825], [63, 842], [247, 735], [309, 742], [355, 743], [393, 748],
        [345, 764], [255, 773], [294, 833], [336, 829], [277, 892], [427, 668], [569, 687], [515, 713], [424, 720],
        [483, 758], [500, 785], [594, 661], [612, 661], [605, 757], [606, 785], [514, 850], [409, 866], [624, 871],
        [583, 887], [606, 887], [571, 916], [405, 812], [239, 650], [261, 720], [239, 720], [134, 900], [28, 664], [70, 686]],
    6: [[33, 5], [95, 17], [163, 20], [243, 54], [273, 81], [235, 119], [531, 35], [447, 59], [290, 233], [121, 192], [82, 273],
        [149, 149], [60, 144], [6, 179], [605, 186], [469, 154], [221, 344], [262, 446], [341, 359], [447, 376],
        [392, 437], [525, 384], [32, 463], [112, 495], [266, 553], [319, 502], [356, 528], [457, 468], [543, 483],
        [530, 526], [548, 542], [466, 545], [632, 498], [606, 555], [634, 577], [525, 602], [149, 761], [69, 819],
        [282, 874], [217, 884], [438, 644], [471, 635], [505, 628], [534, 639], [457, 663], [479, 702], [537, 699],
        [605, 634], [625, 684], [634, 727], [602, 818], [429, 876], [631, 839], [560, 881], [626, 895], [241, 708], [271, 632], [92, 686]],
    8: [[456, 29], [253, 252], [284, 436], [364, 369], [531, 409], [196, 488], [539, 456], [92, 732], [271, 740],
        [245, 680], [622, 767]]
};

// symbol id -> centres
const stamps = {
    bolt: [[78, 212], [567, 520], [50, 807], [371, 763], [592, 910], [81, 707]],
    spark: [[152, 243], [309, 284], [401, 93], [205, 325], [257, 508], [141, 585], [263, 657], [200, 907], [354, 883], [589, 801]],
    cloud: [[99, 44], [274, 60], [641, 178], [521, 502], [413, 763], [582, 768]],
    moon: [[642, 470], [427, 545], [597, 683], [218, 854]],
    cursor: [[152, 278], [526, 116], [607, 528], [489, 724], [549, 850]],
    cross: [[509, 222], [291, 512], [168, 598]],
    star: [[386, 145], [321, 577]],
    diamond: [[293, 587], [550, 903]],
    bag: [[376, 114], [347, 98], [529, 247], [346, 502], [204, 597]]
};

const ringLayer = document.getElementById('rings');
for (const [r, points] of Object.entries(rings)) {
    points.forEach(([cx, cy]) => {
        const circle = document.createElementNS(SVG, 'circle');
        circle.setAttribute('cx', cx);
        circle.setAttribute('cy', cy);
        circle.setAttribute('r', r);
        ringLayer.appendChild(circle);
    });
}

const stampLayer = document.getElementById('stamps');
for (const [name, points] of Object.entries(stamps)) {
    points.forEach(([x, y]) => {
        const use = document.createElementNS(SVG, 'use');
        use.setAttribute('href', '#d-' + name);
        use.setAttribute('x', x);
        use.setAttribute('y', y);
        stampLayer.appendChild(use);
    });
}
```
